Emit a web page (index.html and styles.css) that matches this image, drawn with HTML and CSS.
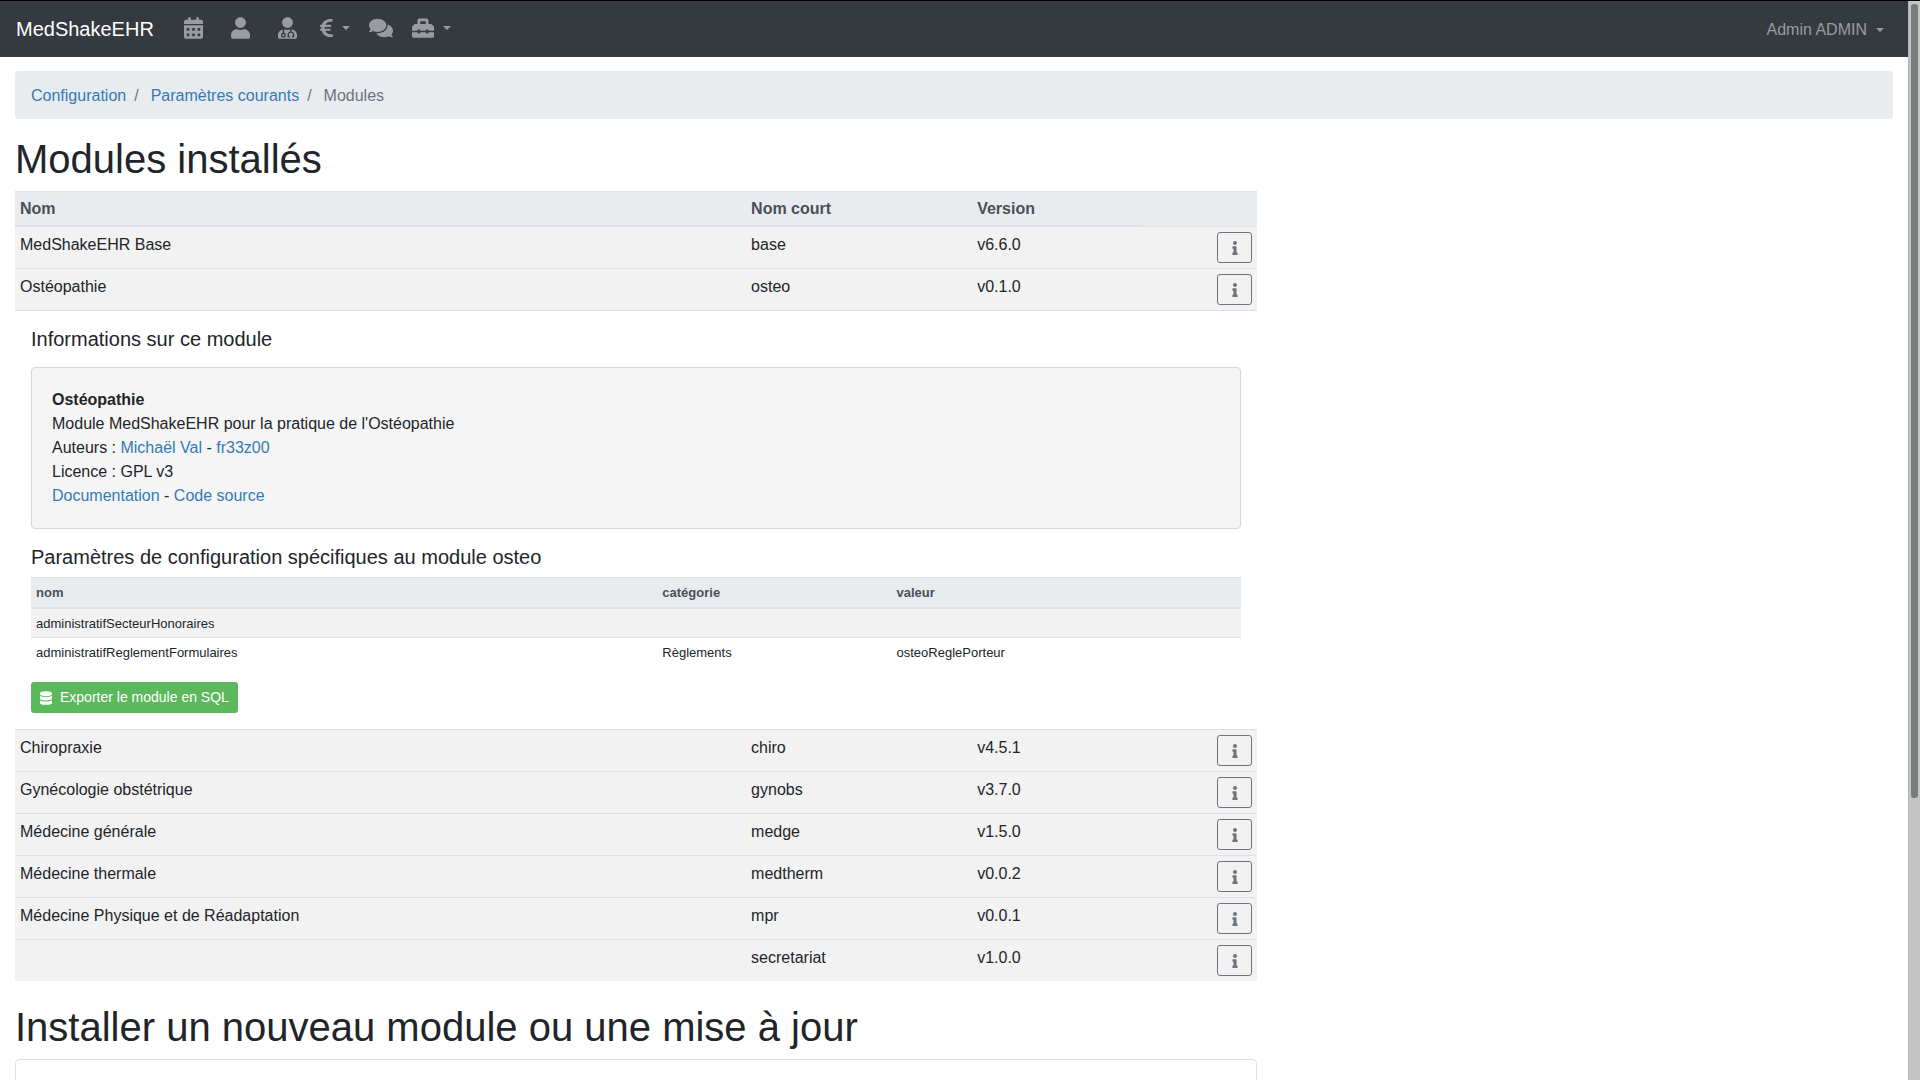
FILE: index.html
```html
<!DOCTYPE html>
<html lang="fr">
<head>
<meta charset="utf-8">
<meta name="viewport" content="width=device-width, initial-scale=1">
<title>MedShakeEHR : modules</title>
<link rel="stylesheet" href="styles.css">
</head>
<body>
<svg class="sprite" aria-hidden="true">
  <symbol id="i-calendar" viewBox="0 0 448 512"><path d="M0 464c0 26.5 21.5 48 48 48h352c26.5 0 48-21.5 48-48V192H0v272zm320-196c0-6.600 5.400-12 12-12h40c6.600 0 12 5.400 12 12v40c0 6.600-5.400 12-12 12h-40c-6.600 0-12-5.400-12-12v-40zm0 128c0-6.600 5.400-12 12-12h40c6.600 0 12 5.400 12 12v40c0 6.600-5.400 12-12 12h-40c-6.600 0-12-5.400-12-12v-40zM192 268c0-6.600 5.400-12 12-12h40c6.600 0 12 5.400 12 12v40c0 6.600-5.400 12-12 12h-40c-6.600 0-12-5.400-12-12v-40zm0 128c0-6.600 5.400-12 12-12h40c6.600 0 12 5.400 12 12v40c0 6.600-5.400 12-12 12h-40c-6.600 0-12-5.400-12-12v-40zM64 268c0-6.600 5.400-12 12-12h40c6.600 0 12 5.400 12 12v40c0 6.600-5.400 12-12 12H76c-6.600 0-12-5.400-12-12v-40zm0 128c0-6.600 5.400-12 12-12h40c6.600 0 12 5.400 12 12v40c0 6.600-5.400 12-12 12H76c-6.600 0-12-5.400-12-12v-40zM400 64h-48V16c0-8.800-7.200-16-16-16h-32c-8.800 0-16 7.200-16 16v48H160V16c0-8.800-7.200-16-16-16h-32c-8.800 0-16 7.200-16 16v48H48C21.500 64 0 85.500 0 112v48h448v-48c0-26.500-21.500-48-48-48z"/></symbol>
  <symbol id="i-user" viewBox="0 0 448 512"><path d="M224 256c70.700 0 128-57.300 128-128S294.700 0 224 0 96 57.300 96 128s57.300 128 128 128zm89.600 32h-16.700c-22.200 10.200-46.900 16-72.900 16s-50.600-5.800-72.900-16h-16.700C60.200 288 0 348.200 0 422.400V464c0 26.500 21.500 48 48 48h352c26.500 0 48-21.500 48-48v-41.600c0-74.200-60.200-134.400-134.400-134.400z"/></symbol>
  <symbol id="i-user-md" viewBox="0 0 448 512"><path d="M224 256c70.700 0 128-57.300 128-128S294.700 0 224 0 96 57.300 96 128s57.300 128 128 128zM104 424c0 13.300 10.700 24 24 24s24-10.700 24-24-10.700-24-24-24-24 10.700-24 24zm216-135.400v49c36.500 7.400 64 39.800 64 78.400v41.700c0 7.600-5.400 14.200-12.900 15.700l-32.200 6.400c-4.300.9-8.500-1.900-9.400-6.300l-3.100-15.700c-.9-4.300 1.900-8.600 6.300-9.400l19.300-3.900V416c0-62.800-96-65.100-96 1.900v26.700l19.300 3.900c4.300.9 7.100 5.100 6.300 9.400l-3.100 15.700c-.9 4.300-5.100 7.100-9.400 6.300l-31.200-4.200c-7.900-1.100-13.800-7.800-13.800-15.900V416c0-38.600 27.500-70.900 64-78.400v-45.200c-2.200.7-4.400 1.100-6.600 1.900-18 6.300-37.300 9.800-57.400 9.800s-39.400-3.500-57.400-9.800c-7.400-2.600-14.900-4.200-22.600-5.200v81.600c23.100 6.900 40 28.100 40 53.400 0 30.900-25.100 56-56 56s-56-25.100-56-56c0-25.300 16.900-46.500 40-53.400v-80.400C48.500 301 0 355.800 0 422.400v44.800C0 491.900 20.100 512 44.800 512h358.400c24.700 0 44.800-20.100 44.800-44.800v-44.800c0-72-56.800-130.300-128-133.800z"/></symbol>
  <symbol id="i-euro" viewBox="0 0 320 512"><path d="M310.706 413.765c-1.314-6.630-7.835-10.872-14.424-9.369-10.692 2.439-27.422 5.413-45.426 5.413-56.763 0-101.929-34.790-121.461-85.449h113.689a12 12 0 0 0 11.708-9.369l6.373-28.360c1.686-7.502-4.019-14.631-11.708-14.631H115.220c-1.210-14.328-1.414-28.287.137-42.245H261.950a12 12 0 0 0 11.723-9.434l6.512-29.755c1.638-7.484-4.061-14.566-11.723-14.566H130.184c20.633-44.991 62.690-75.030 117.619-75.030 14.486 0 28.564 2.250 37.851 4.145 6.216 1.268 12.347-2.498 14.002-8.623l11.991-44.368c1.822-6.741-2.465-13.616-9.326-14.917C290.217 34.912 270.710 32 249.635 32 152.451 32 74.030 92.252 45.075 176H12c-6.627 0-12 5.373-12 12v29.755c0 6.627 5.373 12 12 12h21.569c-1.009 13.607-1.181 29.287-.181 42.245H12c-6.627 0-12 5.373-12 12v28.360c0 6.627 5.373 12 12 12h30.114C67.139 414.692 145.264 480 249.635 480c26.301 0 48.562-4.544 61.101-7.788 6.167-1.595 10.027-7.708 8.788-13.957l-8.818-44.490z"/></symbol>
  <symbol id="i-comments" viewBox="0 0 576 512"><path d="M416 192c0-88.400-93.100-160-208-160S0 103.600 0 192c0 34.300 14.100 65.900 38 92-13.400 30.200-35.500 54.200-35.800 54.500-2.200 2.300-2.800 5.700-1.500 8.700S4.800 352 8 352c36.600 0 66.900-12.300 88.700-25 32.200 15.700 70.300 25 111.300 25 114.900 0 208-71.600 208-160zm122 220c23.900-26 38-57.700 38-92 0-66.900-53.500-124.200-129.300-148.100.9 6.600 1.300 13.300 1.300 20.100 0 105.900-107.700 192-240 192-10.800 0-21.300-.8-31.700-1.900C207.800 439.600 281.800 480 368 480c41 0 79.100-9.200 111.300-25 21.800 12.700 52.100 25 88.700 25 3.200 0 6.100-1.900 7.300-4.800 1.300-2.900.7-6.300-1.500-8.700-.3-.3-22.400-24.200-35.800-54.500z"/></symbol>
  <symbol id="i-toolbox" viewBox="0 0 512 512"><path d="M502.630 214.630l-45.250-45.250c-6-6-14.140-9.370-22.630-9.370H384V80c0-26.510-21.490-48-48-48H176c-26.510 0-48 21.490-48 48v80H77.250c-8.490 0-16.620 3.370-22.630 9.370L9.370 214.630c-6 6-9.370 14.140-9.370 22.630V320h128v-16c0-8.840 7.160-16 16-16h32c8.840 0 16 7.160 16 16v16h128v-16c0-8.840 7.160-16 16-16h32c8.840 0 16 7.160 16 16v16h128v-82.750c0-8.480-3.370-16.620-9.370-22.620zM320 160H192V96h128v64zm64 208c0 8.840-7.160 16-16 16h-32c-8.840 0-16-7.160-16-16v-16H192v16c0 8.840-7.160 16-16 16h-32c-8.840 0-16-7.160-16-16v-16H0v96c0 17.670 14.330 32 32 32h448c17.670 0 32-14.330 32-32v-96H384v16z"/></symbol>
  <symbol id="i-info" viewBox="0 0 192 512"><path d="M20 424.229h20V279.771H20c-11.046 0-20-8.954-20-20V212c0-11.046 8.954-20 20-20h112c11.046 0 20 8.954 20 20v212.229h20c11.046 0 20 8.954 20 20V492c0 11.046-8.954 20-20 20H20c-11.046 0-20-8.954-20-20v-47.771c0-11.046 8.954-20 20-20zM96 0C56.235 0 24 32.235 24 72s32.235 72 72 72 72-32.235 72-72S135.764 0 96 0z"/></symbol>
  <symbol id="i-database" viewBox="0 0 448 512"><path d="M448 73.143v45.714C448 159.143 347.667 192 224 192S0 159.143 0 118.857V73.143C0 32.857 100.333 0 224 0s224 32.857 224 73.143zM448 176v102.857C448 319.143 347.667 352 224 352S0 319.143 0 278.857V176c48.125 33.143 136.208 48.572 224 48.572S399.874 209.143 448 176zm0 160v102.857C448 479.143 347.667 512 224 512S0 479.143 0 438.857V336c48.125 33.143 136.208 48.572 224 48.572S399.874 369.143 448 336z"/></symbol>
</svg>
<div class="window">
  <div class="page">
    <nav class="navbar">
      <a class="brand" href="#">MedShakeEHR</a>
      <a class="nav-icon wide" href="#" aria-label="Agenda"><svg class="icon"><use href="#i-calendar"/></svg></a>
      <a class="nav-icon wide" href="#" aria-label="Patients"><svg class="icon"><use href="#i-user"/></svg></a>
      <a class="nav-icon wide" href="#" aria-label="Praticiens"><svg class="icon"><use href="#i-user-md"/></svg></a>
      <a class="nav-icon" href="#" aria-label="Comptabilité"><svg class="icon slim"><use href="#i-euro"/></svg><span class="caret"></span></a>
      <a class="nav-icon" href="#" aria-label="Messages"><svg class="icon large"><use href="#i-comments"/></svg></a>
      <a class="nav-icon" href="#" aria-label="Outils"><svg class="icon square"><use href="#i-toolbox"/></svg><span class="caret"></span></a>
      <a class="account" href="#">Admin ADMIN<span class="caret"></span></a>
    </nav>
    <main class="content">
      <nav aria-label="Fil d'Ariane">
        <ol class="breadcrumb">
          <li><a href="#">Configuration</a></li>
          <li><a href="#">Paramètres courants</a></li>
          <li class="current">Modules</li>
        </ol>
      </nav>
      <div class="column">
        <h1>Modules installés</h1>
        <table class="modules">
          <colgroup><col class="c-name"><col class="c-short"><col class="c-version"><col></colgroup>
          <thead>
            <tr><th>Nom</th><th>Nom court</th><th>Version</th><td></td></tr>
          </thead>
          <tbody>
            <tr><td>MedShakeEHR Base</td><td>base</td><td>v6.6.0</td><td class="action"><button class="info" type="button" aria-label="Informations"><svg><use href="#i-info"/></svg></button></td></tr>
            <tr><td>Ostéopathie</td><td>osteo</td><td>v0.1.0</td><td class="action"><button class="info" type="button" aria-label="Informations"><svg><use href="#i-info"/></svg></button></td></tr>
            <tr class="details">
              <td colspan="4">
                <h2 class="spaced">Informations sur ce module</h2>
                <div class="card">
                  <strong>Ostéopathie</strong><br>
                  Module MedShakeEHR pour la pratique de l'Ostéopathie<br>
                  Auteurs : <a href="#">Michaël Val</a> - <a href="#">fr33z00</a><br>
                  Licence : GPL v3<br>
                  <a href="#">Documentation</a> - <a href="#">Code source</a>
                </div>
                <h2>Paramètres de configuration spécifiques au module osteo</h2>
                <table class="params">
                  <colgroup><col class="p-name"><col class="p-category"><col></colgroup>
                  <thead><tr><th>nom</th><th>catégorie</th><th>valeur</th></tr></thead>
                  <tbody>
                    <tr class="striped"><td>administratifSecteurHonoraires</td><td></td><td></td></tr>
                    <tr><td>administratifReglementFormulaires</td><td>Règlements</td><td>osteoReglePorteur</td></tr>
                  </tbody>
                </table>
                <button class="export" type="button"><svg><use href="#i-database"/></svg>Exporter le module en SQL</button>
              </td>
            </tr>
            <tr><td>Chiropraxie</td><td>chiro</td><td>v4.5.1</td><td class="action"><button class="info" type="button" aria-label="Informations"><svg><use href="#i-info"/></svg></button></td></tr>
            <tr><td>Gynécologie obstétrique</td><td>gynobs</td><td>v3.7.0</td><td class="action"><button class="info" type="button" aria-label="Informations"><svg><use href="#i-info"/></svg></button></td></tr>
            <tr><td>Médecine générale</td><td>medge</td><td>v1.5.0</td><td class="action"><button class="info" type="button" aria-label="Informations"><svg><use href="#i-info"/></svg></button></td></tr>
            <tr><td>Médecine thermale</td><td>medtherm</td><td>v0.0.2</td><td class="action"><button class="info" type="button" aria-label="Informations"><svg><use href="#i-info"/></svg></button></td></tr>
            <tr><td>Médecine Physique et de Réadaptation</td><td>mpr</td><td>v0.0.1</td><td class="action"><button class="info" type="button" aria-label="Informations"><svg><use href="#i-info"/></svg></button></td></tr>
            <tr><td></td><td>secretariat</td><td>v1.0.0</td><td class="action"><button class="info" type="button" aria-label="Informations"><svg><use href="#i-info"/></svg></button></td></tr>
          </tbody>
        </table>
        <h1>Installer un nouveau module ou une mise à jour</h1>
        <section class="install"></section>
      </div>
    </main>
  </div>
  <div class="scrollbar"><div class="thumb"></div></div>
</div>
</body>
</html>
```

FILE: styles.css
```css
*, *::before, *::after { box-sizing: border-box; }

body {
  margin: 0;
  background: #fff;
  color: #212529;
  font: 16px/24px "Liberation Sans", Arial, sans-serif;
}

a { color: #337ab7; text-decoration: none; }
svg { display: block; fill: currentColor; }
button { font-family: inherit; cursor: pointer; }
.sprite { display: none; }

.window {
  display: grid;
  grid-template-columns: minmax(0, 1fr) 12px;
  height: 100vh;
  border-top: 1px solid #000;
  overflow: hidden;
}

.page { overflow: hidden; }

.scrollbar {
  padding: 3px 2px;
  background: #c3c5c4;
  border-left: 1px solid #b3b5b5;
}

.thumb { height: 74%; border-radius: 3px; background: #787c7d; }

/* Top navigation */
.navbar {
  display: flex;
  align-items: center;
  height: 56px;
  padding: 0 16px;
  background: #343a40;
}

.brand { margin-right: 16px; color: #fff; font-size: 20px; line-height: 30px; }

.nav-icon, .account { display: flex; align-items: center; color: #999c9f; }
.nav-icon { padding: 0 10px 2px 9px; }
.nav-icon.wide { padding: 0 14px 2px; }
.account { margin-left: auto; padding: 2px 8px 0; }

.icon { width: 19px; height: 22px; }
.icon.slim { width: 13px; }
.icon.large { width: 24px; }
.icon.square { width: 22px; }

.caret {
  margin-left: 9px;
  border: 4px solid transparent;
  border-top-color: currentColor;
  border-bottom-width: 0;
}

/* Page content */
.content { padding: 14px 15px 0; }

.breadcrumb {
  display: flex;
  margin: 0 0 16px;
  padding: 13px 16px 11px;
  border-radius: 4px;
  background: #e9ecef;
  list-style: none;
}

.breadcrumb li + li::before { content: "/"; padding: 0 12px 0 8px; color: #6c757d; }
.breadcrumb .current { color: #6c757d; }

.column { width: 66.15%; }

h1 { margin: 0 0 8px; font-size: 40px; line-height: 48px; font-weight: 400; }
h2 { margin: 0 0 8px; font-size: 20px; line-height: 24px; font-weight: 400; }
h2.spaced { margin-bottom: 16px; }

table { width: 100%; table-layout: fixed; border-collapse: separate; border-spacing: 0; }
th, td { padding: 5px; border-top: 1px solid #dee2e6; text-align: left; vertical-align: top; }
thead th, thead td { background: #e9ecef; color: #495057; }
thead th { border-bottom: 1px solid #dee2e6; }

.modules { margin-bottom: 22px; }
.modules > thead > tr > th { padding-bottom: 4px; }
.modules > tbody > tr { background: #f2f2f2; }
.modules > tbody > tr > td { padding-top: 6px; padding-bottom: 4px; }
.modules > tbody > tr > .action { padding: 5px; }
.modules > tbody > .details { background: #fff; }
.modules > tbody > .details > td { padding: 16px; }
.c-name { width: 58.85%; }
.c-short { width: 18.2%; }
.c-version { width: 13.7%; }

.action .info {
  display: flex;
  align-items: center;
  justify-content: center;
  width: 35px;
  height: 31px;
  margin-left: auto;
  padding: 0;
  border: 1px solid #6c757d;
  border-radius: 3px;
  background: transparent;
  color: #6c757d;
}

.info svg { width: 6px; height: 14px; }

.card {
  margin-bottom: 16px;
  padding: 20px;
  border: 1px solid #d7d7d7;
  border-radius: 4px;
  background: #f5f5f5;
}

.params { margin-bottom: 16px; font-size: 13px; line-height: 19px; }
.params tbody td { padding-bottom: 4px; }
.params .striped { background: #f2f2f2; }
.p-name { width: 51.75%; }
.p-category { width: 19.35%; }

.export {
  display: flex;
  align-items: center;
  gap: 8px;
  height: 31px;
  padding: 0 9px;
  border: 0;
  border-radius: 3px;
  background: #5cb85c;
  color: #fff;
  font-size: 14px;
  line-height: 21px;
}

.export svg { width: 12px; height: 14px; }

.install { min-height: 240px; border: 1px solid #dfdfdf; border-radius: 4px; }
```
